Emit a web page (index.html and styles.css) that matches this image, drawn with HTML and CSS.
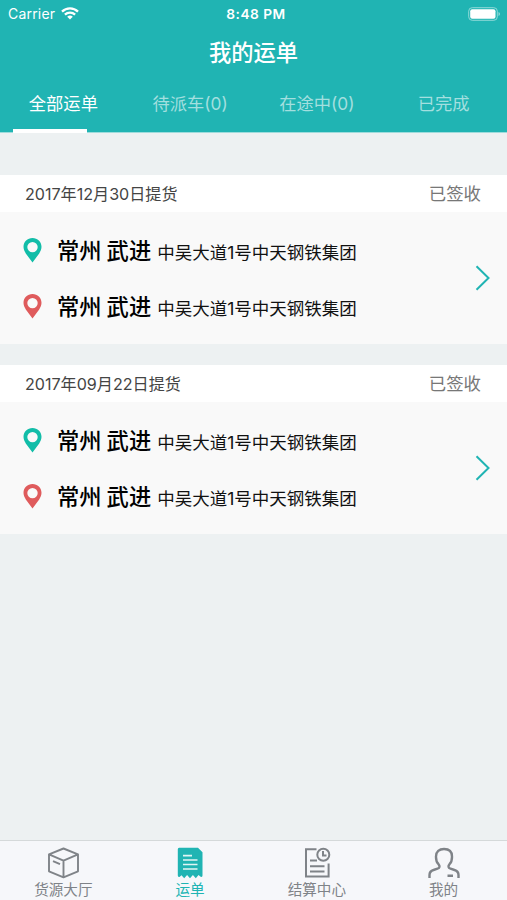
FILE: index.html
```
<!DOCTYPE html>
<html lang="zh-CN">
<head>
    <meta charset="UTF-8">
    <meta name="viewport" content="width=device-width, initial-scale=1.0">
    <title>我的运单</title>
    <link rel="stylesheet" href="styles.css">
</head>
<body>
    <!-- Shared icons -->
    <svg class="defs" width="0" height="0">
        <symbol id="pin" viewBox="0 0 18 25">
            <path fill="currentColor" fill-rule="evenodd" d="M9 0C4 0 0 3.900 0 8.800c0 2.500 1 4.500 2.300 6.700L9 24.500l6.700-9C17 13.300 18 11.300 18 8.800 18 3.900 14 0 9 0zM9 3.900a5.200 5.200 0 1 1 0 10.400A5.200 5.200 0 0 1 9 3.900z"/>
        </symbol>
        <symbol id="arrow" viewBox="0 0 16 26">
            <path d="M1.500 1.300L13.500 13 1.500 24.700" fill="none" stroke="currentColor" stroke-width="2"/>
        </symbol>
    </svg>

    <header class="header">
        <div class="status-bar">
            <div class="carrier">
                <span>Carrier</span>
                <svg width="18" height="13" viewBox="0 0 18 13">
                    <path d="M1 4.700a11.500 11.500 0 0 1 16 0M3.900 7.700a7.400 7.400 0 0 1 10.200 0" fill="none" stroke="#fff" stroke-width="2.300"/>
                    <path d="M9 12.500L6.200 9.800a4 4 0 0 1 5.600 0z" fill="#fff"/>
                </svg>
            </div>
            <span class="time">8:48 PM</span>
            <svg class="battery" width="33" height="14" viewBox="0 0 33 14">
                <rect x="0.700" y="0.700" width="28.600" height="12.600" rx="3.500" fill="none" stroke="#8fd9d8" stroke-width="1"/>
                <rect x="2.200" y="2.200" width="25.300" height="9.600" rx="2" fill="#fff"/>
                <path d="M30.500 5c2 .8 2 3.200 0 4z" fill="#8fd9d8"/>
            </svg>
        </div>
        <h1>我的运单</h1>
        <nav class="tabs">
            <a class="tab active">全部运单</a>
            <a class="tab">待派车(0)</a>
            <a class="tab">在途中(0)</a>
            <a class="tab">已完成</a>
        </nav>
    </header>

    <main class="list">
        <section class="card">
            <div class="card-head">
                <span class="date">2017年12月30日提货</span>
                <span class="state">已签收</span>
            </div>
            <div class="card-body">
                <div class="route">
                    <div class="place">
                        <svg class="pin from"><use href="#pin"/></svg>
                        <b class="city">常州 武进</b>
                        <span class="address">中吴大道1号中天钢铁集团</span>
                    </div>
                    <div class="place">
                        <svg class="pin to"><use href="#pin"/></svg>
                        <b class="city">常州 武进</b>
                        <span class="address">中吴大道1号中天钢铁集团</span>
                    </div>
                </div>
                <svg class="arrow"><use href="#arrow"/></svg>
            </div>
        </section>

        <section class="card">
            <div class="card-head">
                <span class="date">2017年09月22日提货</span>
                <span class="state">已签收</span>
            </div>
            <div class="card-body">
                <div class="route">
                    <div class="place">
                        <svg class="pin from"><use href="#pin"/></svg>
                        <b class="city">常州 武进</b>
                        <span class="address">中吴大道1号中天钢铁集团</span>
                    </div>
                    <div class="place">
                        <svg class="pin to"><use href="#pin"/></svg>
                        <b class="city">常州 武进</b>
                        <span class="address">中吴大道1号中天钢铁集团</span>
                    </div>
                </div>
                <svg class="arrow"><use href="#arrow"/></svg>
            </div>
        </section>
    </main>

    <footer class="tab-bar">
        <a class="item">
            <svg width="34" height="32" viewBox="0 0 34 32" fill="none" stroke="currentColor" stroke-width="1.900" stroke-linejoin="round">
                <path d="M17.500 1.500L32 7.300V24.300L17.500 30.300 3 24.300V7.300zM3 7.300L17.500 13.700 32 7.300M17.500 13.700V30.300M7 14.200l7 3"/>
            </svg>
            <span>货源大厅</span>
        </a>
        <a class="item active">
            <svg width="34" height="32" viewBox="0 0 34 32">
                <path fill="currentColor" d="M6.500 .8H25l4.500 4.500V28.500q0 1.500-1.500 1.500L25.500 28l-2.700 3.200-2.900-3.200-2.900 3.200-2.900-3.200-2.900 3.200-2.700-3-2 1.800q-1.700 0-1.700-1.500V2.300A1.500 1.500 0 0 1 6.500 .8z"/>
                <path d="M10 8.700h9M10 13h14.500M10 17.500h14.500M10 22h14.500" stroke="#dff5f4" stroke-width="1.700"/>
            </svg>
            <span>运单</span>
        </a>
        <a class="item">
            <svg width="34" height="32" viewBox="0 0 34 32" fill="none" stroke="currentColor" stroke-width="2">
                <path d="M16.500 2.300H6V29.500h22.600V16.500M10 13.500h7M10 19.300h14.500M10 24.500h14.500"/>
                <circle cx="23.300" cy="7.800" r="6"/>
                <path d="M23 4v4.500h3.500"/>
            </svg>
            <span>结算中心</span>
        </a>
        <a class="item">
            <svg width="34" height="32" viewBox="0 0 34 32" fill="none" stroke="currentColor" stroke-width="2.400">
                <path d="M2.500 31v-3c0-3 1.300-4.200 4-5l4-1.300c2.500-.8 2.500-2.700 1-4.500C8.800 14.500 9 12 9 9.500 9 4.500 12.200 2 17 2s8 2.500 8 7.500c0 2.500.2 5-2.500 7.700-1.500 1.800-1.500 3.700 1 4.500l4 1.300c2.700.8 4 2 4 5v3M20.500 28.800h5.500"/>
            </svg>
            <span>我的</span>
        </a>
    </footer>
</body>
</html>
```

FILE: styles.css
```
* {
    box-sizing: border-box;
}
body {
    margin: 0;
    height: 900px;
    display: flex;
    flex-direction: column;
    overflow: hidden;
    background-color: #edf1f2;
    font-family: Inter, "Noto Sans CJK SC", sans-serif;
    color: #111;
}
.defs {
    position: absolute;
}

/* Header */
.header {
    height: 133px;
    background-color: #20b4b3;
    color: #fff;
    box-shadow: inset 0 -1px 0 #9fdcdc;
}
.status-bar {
    height: 27px;
    padding: 0 6px 0 8px;
    display: grid;
    grid-template-columns: 1fr auto 1fr;
    align-items: center;
    font-size: 14px;
}
.carrier {
    display: flex;
    align-items: center;
    gap: 6px;
    letter-spacing: 0.2px;
}
.time {
    font-size: 13.7px;
    font-weight: 600;
    letter-spacing: 0.5px;
    padding-left: 3px;
}
.battery {
    justify-self: end;
}
h1 {
    margin: 0;
    height: 48px;
    line-height: 48px;
    text-align: center;
    font-family: "Noto Sans CJK SC", sans-serif;
    font-size: 22.3px;
    font-weight: 500;
}
.tabs {
    height: 58px;
    display: grid;
    grid-template-columns: repeat(4, 1fr);
}
.tab {
    line-height: 58px;
    text-align: center;
    font-size: 17.3px;
    color: #a3dfdf;
}
.tab.active {
    color: #fff;
    background: linear-gradient(#fff, #fff) 13px 100% / 74px 4px no-repeat;
}

/* Waybill list */
.list {
    flex: 1;
    padding-top: 42px;
}
.card {
    height: 169px;
    margin-bottom: 21px;
    background-color: #f9f9f9;
}
.card-head {
    height: 37px;
    padding: 0 26px 0 25px;
    display: flex;
    justify-content: space-between;
    align-items: center;
    background-color: #fff;
}
.date {
    font-size: 16.1px;
    line-height: 36px;
    color: #444;
}
.state {
    font-size: 17.4px;
    line-height: 36px;
    color: #777;
}
.card-body {
    height: 132px;
    padding: 10px 16px 10px 23px;
    display: flex;
    justify-content: space-between;
    align-items: center;
}
.place {
    height: 56px;
    display: flex;
    align-items: center;
}
.pin {
    width: 19px;
    height: 25px;
    margin-right: 15px;
}
.from {
    color: #12bda8;
}
.to {
    color: #df5b5c;
}
.city {
    margin-right: 6px;
    padding-bottom: 2px;
    font-family: "Noto Sans CJK SC", sans-serif;
    font-size: 22.3px;
    font-weight: 500;
    color: #000;
}
.address {
    padding-top: 2px;
    font-size: 17.5px;
}
.arrow {
    width: 16px;
    height: 26px;
    color: #20b4b3;
}

/* Bottom bar */
.tab-bar {
    height: 60px;
    display: grid;
    grid-template-columns: repeat(4, 1fr);
    background-color: #f6f7fa;
    border-top: 1px solid #d5d9da;
}
.item {
    padding-top: 6px;
    display: flex;
    flex-direction: column;
    align-items: center;
    font-size: 14.6px;
    line-height: 22px;
    color: #7f8388;
}
.item.active {
    color: #20b4b3;
}
```
